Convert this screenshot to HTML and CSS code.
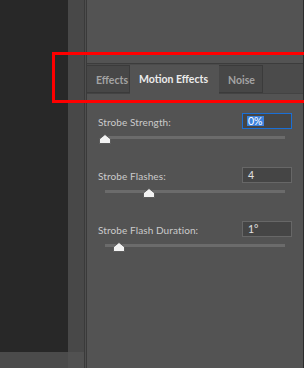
FILE: index.html
```html
<!DOCTYPE html>
<html lang="en">
<head>
  <meta charset="UTF-8">
  <meta name="viewport" content="width=device-width, initial-scale=1.0">
  <title>Motion Effects</title>
  <link rel="stylesheet" href="styles.css">
</head>
<body>
  <div class="window">
    <div class="canvas">
      <div class="canvas-fill"></div>
      <div class="canvas-foot"></div>
    </div>
    <div class="gutter">
      <div class="gutter-fill"></div>
      <div class="gutter-foot"></div>
    </div>
    <div class="divider"></div>

    <div class="panel">
      <div class="panel-top"></div>
      <ul class="tabs">
        <li class="tab-effects">Effects</li>
        <li class="tab-motion active">Motion Effects</li>
        <li class="tab-noise">Noise</li>
      </ul>

      <div class="controls">
        <div class="control">
          <div class="control-head">
            <label>Strobe Strength:</label>
            <span class="field focused"><span class="selected">0%</span></span>
          </div>
          <div class="slider">
            <svg class="thumb" style="left: 0%" viewBox="0 0 12 10" width="12" height="10"><path d="M6 0.5 L11.5 5 V9 Q11.5 9.5 11 9.5 H1 Q0.5 9.5 0.5 9 V5 Z"/></svg>
          </div>
        </div>

        <div class="control">
          <div class="control-head">
            <label>Strobe Flashes:</label>
            <span class="field">4</span>
          </div>
          <div class="slider">
            <svg class="thumb" style="left: 24.4%" viewBox="0 0 12 10" width="12" height="10"><path d="M6 0.5 L11.5 5 V9 Q11.5 9.5 11 9.5 H1 Q0.5 9.5 0.5 9 V5 Z"/></svg>
          </div>
        </div>

        <div class="control">
          <div class="control-head">
            <label>Strobe Flash Duration:</label>
            <span class="field">1°</span>
          </div>
          <div class="slider">
            <svg class="thumb" style="left: 7.8%" viewBox="0 0 12 10" width="12" height="10"><path d="M6 0.5 L11.5 5 V9 Q11.5 9.5 11 9.5 H1 Q0.5 9.5 0.5 9 V5 Z"/></svg>
          </div>
        </div>
      </div>
    </div>

    <!-- annotation frame drawn over the tab strip -->
    <div class="highlight"></div>
  </div>
</body>
</html>
```

FILE: styles.css
```css
* {
  box-sizing: border-box;
  margin: 0;
  padding: 0;
}

body {
  font-family: 'Lato', 'Liberation Sans', sans-serif;
  font-size: 10px;
  background: #535353;
  overflow: hidden;
}

.window {
  position: relative;
  display: flex;
  width: 304px;
  height: 368px;
  overflow: hidden;
}

.canvas {
  display: flex;
  flex-direction: column;
  width: 68px;
}

.canvas-fill {
  flex: 1;
  background: #282828;
}

.canvas-foot {
  height: 16px;
  background: #4b4b4b;
}

.gutter {
  display: flex;
  flex-direction: column;
  width: 16px;
}

.gutter-fill {
  flex: 1;
  background: #484848;
}

.gutter-foot {
  height: 16px;
  background: #515151;
}

.divider {
  width: 3px;
  background: #4e4e4e;
  border-left: 1px solid #3a3a3a;
  border-right: 1px solid #3a3a3a;
}

.panel {
  flex: 1;
  display: flex;
  flex-direction: column;
  background: #535353;
  border-right: 1px solid #2c2c2c;
}

.panel-top {
  height: 64px;
  border-bottom: 1px solid #3c3c3c;
}

.tabs {
  list-style: none;
  display: flex;
  height: 30px;
  padding-top: 1px;
  background: #4b4b4b;
  border-bottom: 1px solid #434343;
}

.tabs li {
  padding-left: 9px;
  font-size: 10.5px;
  line-height: 28px;
  font-weight: 700;
  color: #a3a3a3;
  background: #474747;
  border: 1px solid #3b3b3b;
  border-left: none;
}

.tab-effects {
  width: 43px;
}

.tab-motion {
  width: 89px;
}

.tab-noise {
  width: 44px;
}

.tabs li.active {
  color: #ececec;
  background: #535353;
  border: none;
  margin-bottom: -1px;
}

.controls {
  display: flex;
  flex-direction: column;
  padding: 19px 11px 0;
}

.control {
  height: 54px;
}

.control-head {
  display: flex;
  align-items: center;
  justify-content: space-between;
  height: 16px;
}

.control-head label {
  color: #cbcbcb;
  padding-top: 1px;
  letter-spacing: 0.1px;
}

.field {
  width: 50px;
  height: 16px;
  padding: 0 5px;
  font-size: 10.5px;
  line-height: 14px;
  color: #e2e2e2;
  background: #454545;
  border: 1px solid #676767;
}

.field.focused {
  padding-left: 4px;
  border-color: #1a6fd6;
}

.selected {
  display: inline-block;
  line-height: 10px;
  padding: 0 1px;
  color: #fff;
  background: #3d82dd;
}

.slider {
  position: relative;
  height: 3px;
  margin: 7px 7px 0;
  background: #6b6b6b;
}

.thumb {
  position: absolute;
  top: -2px;
  transform: translateX(-50%);
  fill: #f2f2f2;
  stroke: #4a4a4a;
  stroke-width: 0.8;
}

.highlight {
  position: absolute;
  left: 52px;
  top: 52px;
  width: 260px;
  height: 51px;
  border: 3px solid #ff0000;
}
```
